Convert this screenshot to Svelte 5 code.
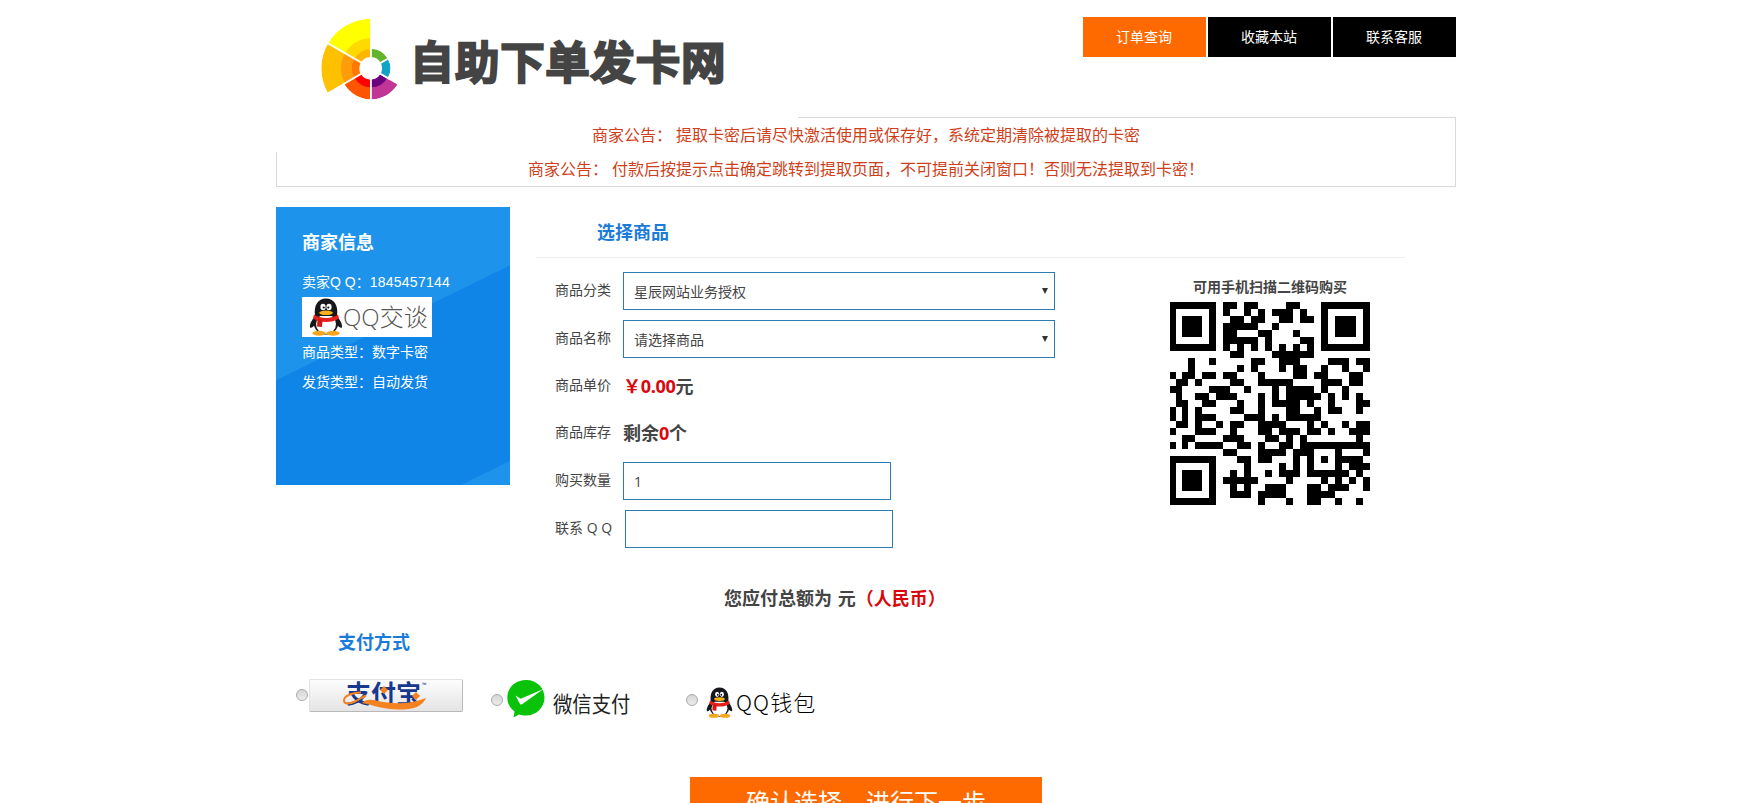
<script>
    const navLinks = [
        { text: '订单查询', active: true },
        { text: '收藏本站', active: false },
        { text: '联系客服', active: false },
    ];

    const categories = ['星辰网站业务授权'];
    const products = ['请选择商品'];

    let category = categories[0];
    let product = products[0];
    let quantity = '1';
    let contact = '';
    let payment = null;

    // rueda del logo: ángulos en grados, anillos de fuera hacia dentro
    const slices = [
        { from: 90, to: 150, rings: [[149, '#ffff00'], [90, '#ffd900'], [57, '#ffb400']] },
        { from: 150, to: 210, rings: [[149, '#ffc000'], [90, '#ff9c0a'], [57, '#ff7800']] },
        { from: 210, to: 270, rings: [[93, '#ff5400'], [57, '#ff0000']] },
        { from: 270, to: 330, rings: [[93, '#c03595'], [57, '#6a007c']] },
        { from: 330, to: 390, rings: [[58, '#12a4c4']] },
        { from: 30, to: 90, rings: [[58, '#62b32e']] },
    ];

    function slicePath(r, from, to) {
        const point = (a) => {
            const rad = (a * Math.PI) / 180;
            return `${(186 + r * Math.cos(rad)).toFixed(1)} ${(175 - r * Math.sin(rad)).toFixed(1)}`;
        };
        return `M186 175L${point(from)}A${r} ${r} 0 0 0 ${point(to)}Z`;
    }

    const qrRows = [
        '#######.##.##....##...#######',
        '#.....#.#..#.#.###.#..#.....#',
        '#.###.#..##.##..##.##.#.###.#',
        '#.###.#.#####..#......#.###.#',
        '#.###.#.##...##...#...#.###.#',
        '#.....#.#####.#....##.#.....#',
        '#######.#.#.#.#.#.#.#.#######',
        '.........##....######........',
        '...#..#.....##..###....###.##',
        '...#......#.#...#.##..#..#..#',
        '#.##.##.##...#....##.##...##.',
        '.##.#....##..#####....###.##.',
        '##....###..#...#.####.#..#...',
        '.#..##.###...#.#.#####.#.#.#.',
        '.##..##...#..#.####.#..#...##',
        '#.#.#....##..#...##..#.##..#.',
        '#.#.###....###.#.#####.......',
        '.##.#..#.##..####...#.#..#.##',
        '#...###..#...##.###.##.#..###',
        '..##....###...##.#.#.......#.',
        '#.#.####..##.#..##.##########',
        '........##...####.###...#...#',
        '#######...##.##...#.#.#.####.',
        '#.....#....#....#.#.#...#.###',
        '#.###.#..#.#..#.###.######.#.',
        '#.###.#.#####....#....#.#.#.#',
        '#.###.#..#.#..###...##.###..#',
        '#.....#..###.####...####.....',
        '#######......#...#..##..#..#.',
    ];
    // las tres primeras columnas son algo más estrechas
    const qrX = (i) => (i < 3 ? i * 6 : 18 + (i - 3) * 7);
    const qrPath = qrRows
        .map((row, y) =>
            [...row].map((c, x) => (c === '#' ? `M${qrX(x)} ${y * 7}H${qrX(x + 1)}v7H${qrX(x)}z` : '')).join('')
        )
        .join('');
</script>

{#snippet penguin()}
    <svg class="penguin" viewBox="0 0 34 38" preserveAspectRatio="none" aria-hidden="true">
        <path d="M8 17C4 20 .5 25 1 29.500c1 1 3 0 6-4zM26 17c4 3 7.500 8 7 12.500-1 1-3 0-6-4z" fill="#15171b" />
        <ellipse cx="17" cy="25" rx="12.300" ry="11.500" fill="#15171b" />
        <ellipse cx="17" cy="26" rx="10" ry="10" fill="#fff" />
        <ellipse cx="10" cy="35.300" rx="6.500" ry="2.500" fill="#f7a51c" />
        <ellipse cx="24" cy="35.300" rx="6.500" ry="2.500" fill="#f7a51c" />
        <path d="M6 18C4.500 7 9 .5 17 .5S29.500 7 28 18z" fill="#15171b" />
        <ellipse cx="14" cy="9" rx="2.6" ry="3.3" fill="#fff" />
        <ellipse cx="20" cy="9" rx="2.6" ry="3.3" fill="#fff" />
        <circle cx="14.8" cy="9.500" r="1.1" fill="#111" />
        <circle cx="19.300" cy="9.500" r="1.1" fill="#111" />
        <ellipse cx="17" cy="14.800" rx="6.800" ry="2.300" fill="#f9b019" />
        <path d="M5 16.500c6 4.500 18 4.500 24 0l1 4c-7 4.700-19 4.700-26 0z" fill="#e3201b" />
        <path d="M8.500 21l5 1-.5 7-5-.5z" fill="#d11713" />
    </svg>
{/snippet}

<div class="page">
    <div class="container">
        <header class="header">
            <div class="logo">
                <svg class="logo__wheel" viewBox="0 0 300 285" aria-hidden="true">
                    {#each slices as slice}
                        {#each slice.rings as ring}
                            <path d={slicePath(ring[0], slice.from, slice.to)} fill={ring[1]} />
                        {/each}
                        <path d={slicePath(slice.rings[0][0] + 3, slice.from, slice.to)} fill="none" stroke="#fff" stroke-width="5" />
                    {/each}
                    <circle cx="185" cy="175" r="34" fill="#fff" />
                </svg>
                <h1 class="logo__text">自助下单发卡网</h1>
            </div>
            <nav class="nav">
                {#each navLinks as link}
                    <a class="nav__link" class:nav__link--active={link.active} href="#top">{link.text}</a>
                {/each}
            </nav>
        </header>

        <section class="notice">
            <p>商家公告： 提取卡密后请尽快激活使用或保存好，系统定期清除被提取的卡密</p>
            <p>商家公告： 付款后按提示点击确定跳转到提取页面，不可提前关闭窗口！否则无法提取到卡密！</p>
        </section>

        <div class="content">
            <aside class="seller">
                <h2 class="seller__title">商家信息</h2>
                <p>卖家Q Q：<span class="seller__number">1845457144</span></p>
                <a class="seller__chat" href="#chat">
                    {@render penguin()}
                    <span>QQ交谈</span>
                </a>
                <p>商品类型：数字卡密</p>
                <p>发货类型：自动发货</p>
            </aside>

            <main class="order">
                <h2 class="title order__title">选择商品</h2>
                <div class="order__body">
                    <div class="form">
                        <div class="row">
                            <label for="category">商品分类</label>
                            <div class="select">
                                <select id="category" bind:value={category}>
                                    {#each categories as item}<option>{item}</option>{/each}
                                </select>
                            </div>
                        </div>
                        <div class="row">
                            <label for="product">商品名称</label>
                            <div class="select">
                                <select id="product" bind:value={product}>
                                    {#each products as item}<option>{item}</option>{/each}
                                </select>
                            </div>
                        </div>
                        <div class="row row--text">
                            <span class="label">商品单价</span>
                            <strong><em>￥0.00</em>元</strong>
                        </div>
                        <div class="row row--text">
                            <span class="label">商品库存</span>
                            <strong>剩余<em>0</em>个</strong>
                        </div>
                        <div class="row">
                            <label for="quantity">购买数量</label>
                            <input id="quantity" class="input" bind:value={quantity} />
                        </div>
                        <div class="row row--contact">
                            <label for="contact">联系 Q Q</label>
                            <input id="contact" class="input" bind:value={contact} />
                        </div>
                    </div>
                    <div class="qr">
                        <p class="qr__text">可用手机扫描二维码购买</p>
                        <svg class="qr__code" viewBox="0 0 200 203" shape-rendering="crispEdges" aria-hidden="true">
                            <path d={qrPath} />
                        </svg>
                    </div>
                </div>
                <p class="total">您应付总额为 元<em>（人民币）</em></p>
            </main>
        </div>

        <h2 class="title pay__title">支付方式</h2>
        <div class="pay">
            <label class="pay__item">
                <input class="radio" type="radio" value="alipay" bind:group={payment} />
                <span class="alipay">
                    <span class="alipay__text">支付宝</span>
                    <span class="alipay__tm">™</span>
                    <svg class="alipay__wave" viewBox="0 0 84 28" aria-hidden="true">
                        <path d="M19 10.500C9 11 2 14 2 18.500c0 4 6 3.500 11 1 4-2 7-4 11-6" fill="none" stroke="#f58220" stroke-width="2" />
                        <path d="M20 21c3-3.500 8-4 14-2.500 17 4 34 4 50-2.500-4 9-13 11.500-27 11.500-16 0-24-4-37-6.500z" fill="#f58220" />
                        <path d="M42 4l4 4-4 4-4-4zM74 10l4 4-4 4-4-4z" fill="#f58220" />
                    </svg>
                </span>
            </label>
            <label class="pay__item pay__item--wechat">
                <input class="radio" type="radio" value="wechat" bind:group={payment} />
                <svg class="wechat" viewBox="0 0 38 38" aria-hidden="true">
                    <path d="M19 0c10.500 0 18.500 7.500 18.500 17.500S29.500 35.500 19 35.500c-3 0-5-.3-7-1l-5.500 3 1-6C3 28 .3 23.500.3 17.500.3 7.500 8.500 0 19 0z" fill="#0bc20b" />
                    <path d="M8.500 15.500l5.200 3.200L36.500 9 15 24.200c-1 .7-1.800.5-2.300-.6z" fill="#fff" />
                </svg>
                <span class="pay__wechat-text">微信支付</span>
            </label>
            <label class="pay__item pay__item--qq">
                <input class="radio" type="radio" value="qq" bind:group={payment} />
                {@render penguin()}
                <span class="pay__qq-text">QQ钱包</span>
            </label>
        </div>

        <button class="submit">确认选择，进行下一步</button>
    </div>
</div>

<style>
    :global(body) {
        margin: 0;
        overflow: hidden;
        background-color: #fff;
    }

    .page {
        height: 803px;
        overflow: hidden;
        color: #444;
        font-family: "Open Sans", "Noto Sans CJK SC", sans-serif;
        font-size: 14px;
    }

    .container {
        width: 1180px;
        margin: 0 auto;
        padding-right: 13px;
    }

    p, h1, h2 {
        margin: 0;
    }

    em {
        font-style: normal;
        color: #d9080d;
    }

    /* HEADER */
    .header {
        display: flex;
        justify-content: space-between;
        height: 117px;
    }

    /* el logo es más alto que la cabecera y tapa parte del borde del aviso */
    .logo {
        display: flex;
        flex: none;
        box-sizing: border-box;
        width: 522px;
        height: 152px;
        padding: 10px 0 0 33px;
        background-color: #fff;
        position: relative;
        z-index: 1;
    }

    .logo__wheel {
        width: 100px;
        height: 95px;
    }

    .logo__text {
        margin: 20px 0 0 1px;
        color: #444;
        font-family: "Noto Sans CJK SC", sans-serif;
        font-size: 44px;
        font-weight: 500;
        line-height: 60px;
        letter-spacing: 1.2px;
        white-space: nowrap;
        -webkit-text-stroke: 3px #444;
    }

    .nav {
        display: flex;
        gap: 2px;
        padding-top: 17px;
    }

    .nav__link {
        box-sizing: border-box;
        width: 123px;
        height: 40px;
        padding-right: 1px;
        color: #fff;
        background-color: #000;
        line-height: 40px;
        text-align: center;
        text-decoration: none;
    }

    .nav__link--active {
        background-color: #ff6a00;
    }

    /* NOTICE */
    .notice {
        border: 1px solid #d9d9d9;
        color: #cf3f1c;
        font-size: 16px;
        line-height: 34px;
        text-align: center;
    }

    .notice p {
        position: relative;
        z-index: 2;
    }

    .content {
        display: flex;
        margin-top: 20px;
    }

    /* SELLER */
    .seller {
        flex: none;
        box-sizing: border-box;
        width: 234px;
        height: 278px;
        padding: 21px 26px;
        color: #fff;
        font-family: "Liberation Sans", "Noto Sans CJK SC", sans-serif;
        line-height: 30px;
        background: linear-gradient(153.8deg, #1e93ec 44%, #1085e8 44.2%, #1085e8 93.8%, #1e93ec 94%);
    }

    .seller__title {
        margin-bottom: 9px;
        font-size: 18px;
        line-height: 30px;
    }

    .seller__number {
        letter-spacing: 0.25px;
    }

    .seller__chat {
        display: flex;
        align-items: center;
        width: 130px;
        height: 40px;
        color: #555;
        background-color: #fff;
        font-family: "Open Sans", "Noto Sans CJK SC", sans-serif;
        font-size: 24px;
        font-weight: 300;
        line-height: 36px;
        text-decoration: none;
        white-space: nowrap;
    }

    .seller__chat .penguin {
        flex: none;
        width: 34px;
        height: 38px;
        margin-left: 7px;
    }

    /* ORDER */
    .title {
        color: #1b7bd8;
        font-size: 18px;
        font-weight: 700;
    }

    .order {
        flex: 1;
        padding-left: 26px;
    }

    .order__title {
        width: 808px;
        height: 50px;
        padding-left: 61px;
        border-bottom: 1px solid #eee;
        line-height: 50px;
    }

    .order__body {
        display: flex;
        padding: 9px 0 0 19px;
    }

    .form {
        width: 500px;
    }

    .row {
        display: flex;
        align-items: center;
        height: 48px;
    }

    .row--text {
        height: 47px;
    }

    .row label,
    .label {
        width: 68px;
        line-height: 20px;
        margin-top: -2px;
        white-space: nowrap;
    }

    .row .label {
        margin-top: -4px;
    }

    .row--contact label {
        width: 70px;
    }

    .row strong {
        margin-top: -2px;
        font-size: 18px;
        line-height: 26px;
    }

    .row em {
        letter-spacing: -0.3px;
    }

    .select {
        width: 432px;
        height: 38px;
        position: relative;
    }

    .select::after {
        content: "";
        border: 3.5px solid transparent;
        border-top: 6px solid #333;
        border-bottom: 0;
        position: absolute;
        top: 16px;
        right: 7px;
    }

    select,
    .input {
        box-sizing: border-box;
        width: 100%;
        height: 38px;
        margin: 0;
        padding: 0 10px;
        border: 1px solid #2c7cb4;
        border-radius: 0;
        outline: 0;
        color: #444;
        background-color: #fff;
        font: inherit;
        appearance: none;
    }

    .input {
        width: 268px;
    }

    /* QR */
    .qr {
        display: flex;
        flex-direction: column;
        align-items: center;
        width: 200px;
        margin-left: 115px;
        padding-top: 10px;
    }

    .qr__text {
        font-weight: 700;
        line-height: 20px;
        white-space: nowrap;
    }

    .qr__code {
        width: 200px;
        height: 203px;
        margin-top: 5px;
    }

    .total {
        margin-top: 30px;
        padding-left: 188px;
        font-size: 18px;
        font-weight: 700;
        line-height: 30px;
        word-spacing: 1px;
    }

    /* PAY */
    .pay__title {
        margin-top: 14px;
        padding-left: 62px;
        line-height: 30px;
    }

    .pay {
        display: flex;
        height: 54px;
        padding: 22px 0 0 20px;
        color: #222;
    }

    .pay__item {
        display: flex;
        align-items: flex-start;
        flex: none;
        width: 195px;
    }

    .radio {
        flex: none;
        box-sizing: border-box;
        width: 12px;
        height: 12px;
        margin: 10px 1px 0 0;
        border: 1px solid #aaa;
        border-radius: 50%;
        background: linear-gradient(#d6d6d6, #ececec);
        appearance: none;
    }

    .pay__item--wechat .radio,
    .pay__item--qq .radio {
        margin-top: 15px;
    }

    .alipay {
        display: flex;
        box-sizing: border-box;
        width: 154px;
        height: 33px;
        padding-left: 36px;
        border: 1px solid #e2e2e2;
        border-right-color: #b8b8b8;
        border-bottom-color: #b8b8b8;
        border-radius: 2px;
        background: linear-gradient(#fdfdfd, #e4e4e4);
        position: relative;
    }

    .alipay__text {
        color: #17388c;
        font-size: 25px;
        font-weight: 700;
        line-height: 27px;
        white-space: nowrap;
    }

    .alipay__tm {
        margin: 1px 0 0 1px;
        color: #17388c;
        font-size: 6px;
        line-height: 8px;
    }

    .alipay__wave {
        width: 84px;
        height: 28px;
        position: absolute;
        top: 2px;
        left: 32px;
    }

    .wechat {
        flex: none;
        width: 38px;
        height: 38px;
        margin: 1px 8px 0 3px;
    }

    .pay__wechat-text {
        font-size: 21.5px;
        line-height: 30px;
        margin-top: 10px;
        white-space: nowrap;
        transform: scaleX(0.9);
        transform-origin: left;
    }

    .pay__item--qq .penguin {
        flex: none;
        width: 27px;
        height: 31px;
        margin: 8px 3px 0 7px;
    }

    .pay__qq-text {
        margin-top: 8px;
        color: #000;
        font-family: "Noto Sans CJK SC", sans-serif;
        font-size: 22px;
        line-height: 28px;
        font-weight: 300;
        letter-spacing: 1.1px;
        white-space: nowrap;
    }

    .submit {
        display: block;
        width: 352px;
        height: 50px;
        margin: 44px auto 0;
        padding: 0;
        border: 0;
        color: #fff;
        background-color: #ff6a00;
        font-family: inherit;
        font-size: 24px;
        line-height: 50px;
    }
</style>
